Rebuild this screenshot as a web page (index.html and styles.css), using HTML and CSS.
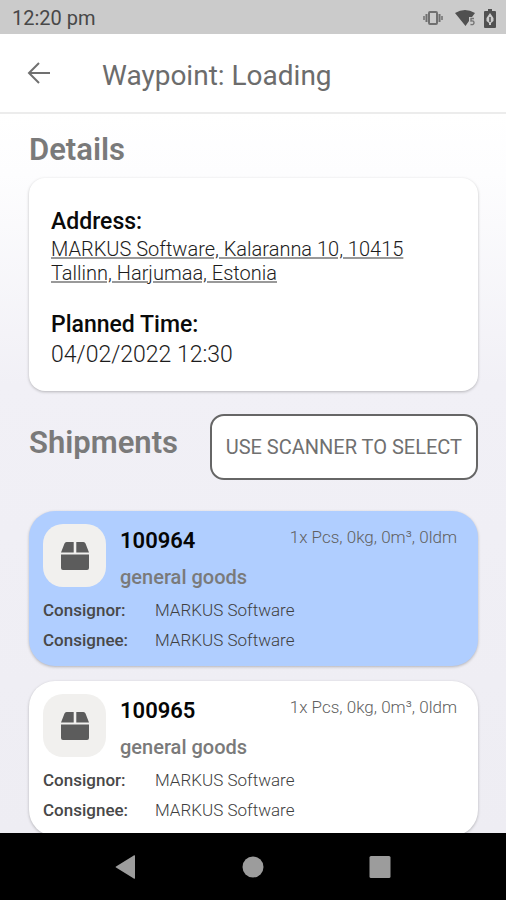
FILE: index.html
```html
<!DOCTYPE html>
<html lang="en">
<head>
<meta charset="utf-8">
<meta name="viewport" content="width=device-width, initial-scale=1">
<title>Waypoint: Loading</title>
<link rel="stylesheet" href="styles.css">
</head>
<body>
<div class="status-bar">
  <span>12:20 pm</span>
  <div class="status-icons">
    <svg width="20" height="16" viewBox="0 0 20 16" fill="none" stroke="#707070" stroke-width="2" aria-hidden="true"><rect x="6" y="2" width="8" height="12" rx="1"/><path d="M3.500 4v8M16.500 4v8"/><path d="M1 6v4M19 6v4" stroke-width="1.500"/></svg>
    <svg width="21" height="18" viewBox="0 0 21 18" aria-hidden="true"><path d="M0 4Q10 -2 20 4L17 8H14V12L10.500 17Z" fill="#505050"/><path d="M19 9.500h-3v2.500q3-.5 3 1.800t-3.500 1.700" fill="none" stroke="#757575" stroke-width="1.400"/></svg>
    <svg width="12" height="19" viewBox="0 0 12 19" aria-hidden="true"><path d="M4 0h4v2h3a1 1 0 0 1 1 1v15a1 1 0 0 1-1 1H1a1 1 0 0 1-1-1V3a1 1 0 0 1 1-1h3z" fill="#505050"/><path d="M6 4L9.500 9V12L7 14V16H5V14L2.500 12V9Z" fill="#cbcbcb"/><path d="M6 8v5" stroke="#505050" stroke-width="1.500"/></svg>
  </div>
</div>
<header class="app-bar">
  <button class="back" type="button" aria-label="Back">
    <svg width="24" height="24" viewBox="0 0 24 24" fill="none" stroke="#707070" stroke-width="2" aria-hidden="true"><path d="M24 12H3M13 2L3 12l10 10"/></svg>
  </button>
  <h1>Waypoint: Loading</h1>
</header>
<main class="content">
  <h2>Details</h2>
  <section class="details">
    <h3>Address:</h3>
    <a class="address" href="#map">MARKUS Software, Kalaranna 10, 10415 Tallinn, Harjumaa, Estonia</a>
    <h3>Planned Time:</h3>
    <p class="time">04/02/2022 12:30</p>
  </section>
  <div class="shipments-head">
    <h2>Shipments</h2>
    <button class="scan" type="button">USE SCANNER TO SELECT</button>
  </div>
  <article class="shipment selected">
    <div class="summary">
      <div class="thumb"><svg width="30" height="30" viewBox="0 0 30 30" fill="#5c5c5c" aria-hidden="true"><path d="M6.500 1H13.700V11.500H1L4.500 2.500Q5 1 6.500 1ZM16.300 1H23.500Q25 1 25.500 2.500L29 11.500H16.300ZM1 13.500H29V27Q29 29 27 29H3Q1 29 1 27Z"/></svg></div>
      <div class="names"><h3>100964</h3><p class="goods">general goods</p></div>
      <p class="amount">1x Pcs, 0kg, 0m³, 0ldm</p>
    </div>
    <dl class="parties">
      <dt>Consignor:</dt><dd>MARKUS Software</dd>
      <dt>Consignee:</dt><dd>MARKUS Software</dd>
    </dl>
  </article>
  <article class="shipment">
    <div class="summary">
      <div class="thumb"><svg width="30" height="30" viewBox="0 0 30 30" fill="#5c5c5c" aria-hidden="true"><path d="M6.500 1H13.700V11.500H1L4.500 2.500Q5 1 6.500 1ZM16.300 1H23.500Q25 1 25.500 2.500L29 11.500H16.300ZM1 13.500H29V27Q29 29 27 29H3Q1 29 1 27Z"/></svg></div>
      <div class="names"><h3>100965</h3><p class="goods">general goods</p></div>
      <p class="amount">1x Pcs, 0kg, 0m³, 0ldm</p>
    </div>
    <dl class="parties">
      <dt>Consignor:</dt><dd>MARKUS Software</dd>
      <dt>Consignee:</dt><dd>MARKUS Software</dd>
    </dl>
  </article>
</main>
<nav class="system-nav">
  <button type="button" aria-label="Back"><svg width="24" height="24" viewBox="0 0 24 24" fill="#9c9c9c" aria-hidden="true"><path d="M21 0.500V23.500Q20 24 19 23L2 12.500Q1 12 2 11.500L19 1Q20 0 21 0.500Z"/></svg></button>
  <button type="button" aria-label="Home"><svg width="24" height="24" viewBox="0 0 24 24" fill="#9c9c9c" aria-hidden="true"><circle cx="12" cy="12" r="10.500"/></svg></button>
  <button type="button" aria-label="Recent apps"><svg width="24" height="24" viewBox="0 0 24 24" fill="#9c9c9c" aria-hidden="true"><rect x="1.500" y="1" width="21" height="22" rx="1.500"/></svg></button>
</nav>
</body>
</html>
```
FILE: styles.css
```css
* { box-sizing: border-box; }
body {
  margin: 0;
  height: 100vh;
  display: flex;
  flex-direction: column;
  font-family: Roboto, "Liberation Sans", sans-serif;
  color: #1c1c1c;
  background: #fff;
}
h1, h2, h3, p, dl, dd { margin: 0; }
button { font: inherit; cursor: pointer; }
svg { display: block; }

.status-bar {
  flex: none;
  height: 34px;
  padding: 2px 10px 0 12px;
  display: flex;
  align-items: center;
  justify-content: space-between;
  background: #cbcbcb;
  color: #484848;
  font-size: 20px;
}
.status-icons { display: flex; align-items: center; gap: 12px; }
.status-icons svg:last-child { margin-left: -4px; }

.app-bar {
  flex: none;
  height: 80px;
  padding: 0 28px 0 26px;
  display: flex;
  align-items: center;
  gap: 52px;
  border-bottom: 2px solid #ececec;
}
.back { padding: 0; border: 0; background: none; }
h1 { padding-top: 5px; font-size: 28px; line-height: 36px; font-weight: 400; color: #6c6c6c; }

.content {
  flex: 1;
  min-height: 0;
  overflow: hidden;
  padding: 18px 28px 0 29px;
  background: linear-gradient(#fff 0, #fdfdfe 60px, #f1f0f6 270px, #eeedf3 100%);
}
h2 { font-size: 31px; line-height: 36px; font-weight: 600; color: #7a7a7a; }
.details {
  margin: 10px 0 23px;
  padding: 29px 22px 21px;
  border-radius: 16px;
  background: #fff;
  box-shadow: 0 1px 3px rgba(0, 0, 0, 0.25);
}
.details h3, .time { font-size: 23px; line-height: 30px; }
.details h3 { font-weight: 500; color: #0a0a0a; }
.address {
  display: block;
  margin-bottom: 25px;
  font-size: 20px;
  line-height: 24px;
  font-weight: 300;
  color: #1c1c1c;
  text-decoration-color: #999;
}
.time { font-weight: 300; }

.shipments-head {
  display: flex;
  align-items: center;
  justify-content: space-between;
  margin-bottom: 31px;
}
.shipments-head h2 { padding-bottom: 8px; }
.scan {
  height: 66px;
  padding: 0 14px;
  border: 2px solid #666;
  border-radius: 14px;
  background: #fff;
  color: #707070;
  font-size: 20px;
}

.shipment {
  margin-bottom: 15px;
  padding: 13px 14px 11px;
  border-radius: 26px;
  background: #fff;
  box-shadow: 0 1px 3px rgba(0, 0, 0, 0.25);
}
.shipment.selected { background: #b0ceff; }
.summary { display: flex; gap: 14px; }
.thumb {
  flex: none;
  width: 63px;
  height: 63px;
  display: grid;
  place-items: center;
  border-radius: 20px;
  background: #f1f0ee;
}
.names { flex: 1; }
.names h3 { font-size: 22px; line-height: 34px; font-weight: 600; color: #050505; }
.goods { margin-top: 6px; font-size: 20px; line-height: 26px; font-weight: 500; color: #7a7a7a; }
.amount { padding-right: 7px; font-size: 17px; line-height: 26px; font-weight: 300; color: #606060; }
.parties {
  display: grid;
  grid-template-columns: 112px 1fr;
  margin-top: 5px;
  font-size: 17px;
  line-height: 30px;
}
.parties dt { font-weight: 500; color: #484848; }
.parties dd { font-weight: 300; color: #404040; }

.system-nav {
  flex: none;
  height: 67px;
  display: flex;
  align-items: center;
  justify-content: center;
  gap: 103px;
  background: #000;
}
.system-nav button { padding: 0; border: 0; background: none; }
```
